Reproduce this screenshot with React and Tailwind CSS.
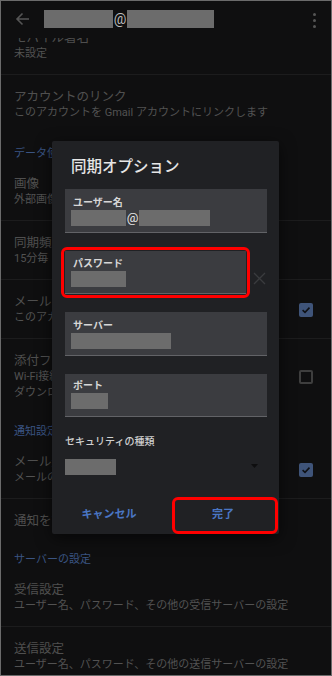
import React from "react";

const FONT = "font-['Roboto','Noto_Sans_CJK_JP',sans-serif]";

function Check({ checked }) {
  if (checked) {
    return (
      <div className="w-[14px] h-[14px] rounded-[2px] bg-[#3f5479] flex items-center justify-center shrink-0">
        <svg width="10" height="10" viewBox="0 0 10 10" fill="none">
          <path d="M1.6 5.2 L4 7.4 L8.5 2.6" stroke="#0f1115" strokeWidth="1.6" />
        </svg>
      </div>
    );
  }
  return <div className="w-[14px] h-[14px] rounded-[2px] border-2 border-[#3e3e3e] shrink-0" />;
}

function Row({ title, sub = [], check, divider = true }) {
  return (
    <div className={`flex items-center pl-[13px] pr-[18px] pt-[13px] pb-[12px] ${divider ? "border-b border-[#1c1c1d]" : ""}`}>
      <div className="flex-1 min-w-0">
        <div className="text-[12.5px] leading-[17px] text-[#4f4f4f] whitespace-nowrap">{title}</div>
        {sub.map((s, i) => (
          <div key={i} className="text-[11px] leading-[16px] text-[#525252] whitespace-nowrap">{s}</div>
        ))}
      </div>
      {check !== undefined && <Check checked={check} />}
    </div>
  );
}

function Section({ label, pt }) {
  return (
    <div className={`pl-[13px] ${pt} text-[11px] leading-[16px] text-[#3a5482]`}>{label}</div>
  );
}

function Field({ label, pt, pb, children, className = "" }) {
  return (
    <div className={`bg-[#3b3c40] border-b border-[#626367] pl-[6px] ${pt} ${pb} ${className}`}>
      <div className="pl-[2px] text-[10px] leading-[14px] font-bold text-[#d6d6d6]">{label}</div>
      <div className="flex items-center h-[16px]">{children}</div>
    </div>
  );
}

const Block = ({ w }) => <div className={`h-[16px] bg-[#6c6c6c] ${w}`} />;

export default function App() {
  return (
    <div className={`${FONT} w-[332px] h-[676px] overflow-hidden border border-[#6b6b6b] bg-[#0f0f10] relative`}>
      {/* header */}
      <div className="relative z-10 h-[37px] bg-[#0f0f10] flex items-start pt-[9px] pl-[14px] pr-[15px]">
        <svg width="15" height="16" viewBox="0 0 15 16" fill="none" className="mt-[1px]">
          <path d="M14 8 H2 M7.5 2.5 L2 8 L7.5 13.5" stroke="#555" strokeWidth="1.6" />
        </svg>
        <div className="ml-[14px] flex items-center h-[18px]">
          <div className="w-[69px] h-[18px] bg-[#6c6c6c]" />
          <span className="w-[14px] text-center text-[14px] leading-[18px] text-[#bdbdbd]">@</span>
          <div className="w-[87px] h-[18px] bg-[#6c6c6c]" />
        </div>
        <div className="flex-1" />
        <div className="flex flex-col gap-[3px] mt-[3px]">
          <div className="w-[3px] h-[3px] rounded-full bg-[#555]" />
          <div className="w-[3px] h-[3px] rounded-full bg-[#555]" />
          <div className="w-[3px] h-[3px] rounded-full bg-[#555]" />
        </div>
      </div>

      {/* list */}
      <div className="-mt-[22px]">
        <Row title="モバイル署名" sub={["未設定"]} />
        <Row title="アカウントのリンク" sub={["このアカウントを Gmail アカウントにリンクします"]} divider={false} />
        <Section label="データ使用量" pt="pt-[13px]" />
        <Row title="画像" sub={["外部画像を表示する前に確認する"]} />
        <Row title="同期頻度" sub={["15分毎"]} />
        <Row title="メールを同期" sub={["このアカウントのメールを同期する"]} check={true} />
        <Row
          title="添付ファイルをダウンロード"
          sub={["Wi-Fi接続時に最近のメールの添付ファイルを", "ダウンロードする"]}
          check={false}
          divider={false}
        />
        <Section label="通知設定" pt="pt-[11px]" />
        <Row title="メール通知" sub={["メールの着信時に通知する"]} check={true} />
        <Row title="通知を管理" divider={false} />
        <Section label="サーバーの設定" pt="pt-[11px]" />
        <Row title="受信設定" sub={["ユーザー名、パスワード、その他の受信サーバーの設定"]} />
        <Row title="送信設定" sub={["ユーザー名、パスワード、その他の送信サーバーの設定"]} divider={false} />
      </div>

      {/* dialog */}
      <div className="absolute left-[51px] top-[140px] w-[227px] bg-[#202124] rounded-[2px] shadow-[0_4px_16px_rgba(0,0,0,0.6)] pt-[16px] z-20">
        <div className="pl-[19px] text-[15.5px] leading-[20px] font-medium text-[#e6e6e6]">同期オプション</div>

        <div className="pl-[13px] pr-[12px]">
          <Field label="ユーザー名" pt="pt-[7px]" pb="pb-[6px]" className="mt-[12px]">
            <Block w="w-[55px]" />
            <span className="w-[13px] text-center text-[13px] leading-[16px] text-[#e6e6e6]">@</span>
            <Block w="w-[71px]" />
          </Field>

          <div className="flex items-start mt-[14px] -ml-[4px]">
            <div className="w-[189px] border-[3px] border-[#ff0000] rounded-[6px] p-[1px]">
              <Field label="パスワード" pt="pt-[6px]" pb="pb-[6px]">
                <Block w="w-[55px]" />
              </Field>
            </div>
            <svg width="13" height="13" viewBox="0 0 13 13" className="ml-[3px] mt-[25px]">
              <path d="M1 1 L12 12 M12 1 L1 12" stroke="#3a3b3e" strokeWidth="1.3" />
            </svg>
          </div>

          <Field label="サーバー" pt="pt-[7px]" pb="pb-[6px]" className="mt-[14px]">
            <Block w="w-[100px]" />
          </Field>

          <Field label="ポート" pt="pt-[5px]" pb="pb-[7px]" className="mt-[18px]">
            <Block w="w-[37px]" />
          </Field>

          <div className="mt-[18px] text-[10px] leading-[14px] font-medium text-[#cfcfcf]">セキュリティの種類</div>
          <div className="mt-[10px] flex items-center h-[16px]">
            <div className="w-[51px] h-[16px] bg-[#6c6c6c]" />
            <div className="flex-1" />
            <svg width="7" height="4" viewBox="0 0 7 4" className="mr-[9px] -mt-[3px]">
              <path d="M0 0 H7 L3.5 4 Z" fill="#0e0e0f" />
            </svg>
          </div>
        </div>

        <div className="mt-[22px] flex h-[37px]">
          <div className="w-[114px] flex items-center justify-center text-[11px] font-bold text-[#4a76c4]">キャンセル</div>
          <div className="ml-[6px] w-[106px] h-[37px] border-[3px] border-[#ff0000] rounded-[6px] flex items-center justify-center pr-[4px] text-[11px] font-bold text-[#4a76c4]">完了</div>
        </div>
      </div>
    </div>
  );
}
